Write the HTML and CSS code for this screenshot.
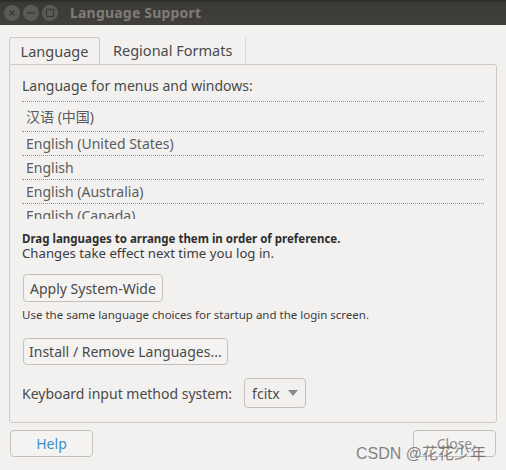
FILE: index.html
```html
<!DOCTYPE html>
<html>
<head>
<meta charset="utf-8">
<link rel="stylesheet" href="styles.css">
</head>
<body>
<div class="window">
  <div class="titlebar">
    <div class="wbtns">
      <span class="wbtn"><svg width="16" height="16" viewBox="0 0 16 16"><path d="M5.5 5.5l5 5M10.5 5.5l-5 5" stroke="#3a3935" stroke-width="1.4" fill="none"/></svg></span>
      <span class="wbtn"><svg width="16" height="16" viewBox="0 0 16 16"><path d="M4 8h8" stroke="#3a3935" stroke-width="1.4" fill="none"/></svg></span>
      <span class="wbtn"><svg width="16" height="16" viewBox="0 0 16 16"><rect x="4.5" y="4.5" width="7" height="7" stroke="#3a3935" stroke-width="1.2" fill="none"/></svg></span>
    </div>
    <div class="title">Language Support</div>
  </div>
  <div class="content">
    <div class="tabs">
      <div class="tab active">Language</div>
      <div class="tab">Regional Formats</div>
    </div>
    <div class="panel">
      <div class="heading">Language for menus and windows:</div>
      <div class="list">
        <div class="item cjk">汉语 (中国)</div>
        <div class="item">English (United States)</div>
        <div class="item">English</div>
        <div class="item">English (Australia)</div>
        <div class="item">English (Canada)</div>
      </div>
      <div class="note">
        <div class="drag">Drag languages to arrange them in order of preference.</div>
        <div class="changes">Changes take effect next time you log in.</div>
      </div>
      <div class="btn apply">Apply System-Wide</div>
      <div class="note2">Use the same language choices for startup and the login screen.</div>
      <div class="btn install">Install / Remove Languages...</div>
      <div class="kbd">
        <span>Keyboard input method system:</span>
        <div class="combo">fcitx <svg width="10" height="6" viewBox="0 0 10 6"><path d="M0 0h10L5 6z" fill="#8a8a8a"/></svg></div>
      </div>
    </div>
    <div class="footer">
      <div class="btn help">Help</div>
      <div class="btn close">Close</div>
    </div>
  </div>
  <div class="watermark">CSDN @花花少年</div>
</div>
</body>
</html>
```
FILE: styles.css
```css
html, body { margin: 0; padding: 0; }
body {
  width: 506px; height: 470px; overflow: hidden;
  background: #f2f1f0;
  font-family: "Noto Sans", "Noto Sans CJK SC", sans-serif;
  color: #3c3c3c;
}
.window { position: relative; width: 506px; height: 470px; }
.titlebar {
  height: 25px;
  background: linear-gradient(#2a2926 0, #3b3a36 3px, #403f3b 25px);
  display: flex; align-items: center;
}
.wbtns { display: flex; gap: 3px; margin-left: 4px; }
.wbtn {
  width: 16px; height: 16px; border-radius: 50%;
  background: #5b5a56; display: flex;
}
.title {
  margin-left: 12px; font-weight: bold; font-size: 14px;
  color: #7f7c77; letter-spacing: 0.2px;
}
.content { padding: 12px 9px 0 9px; }
.tabs { display: flex; height: 27px; }
.tab {
  font-size: 14.5px; color: #4a4a4a; line-height: 27px;
  padding: 0 13px;
}
.tab.active {
  width: 91px; box-sizing: border-box; text-align: center; padding: 0;
  border: 1px solid #cdc9c4; border-bottom: none; border-radius: 3px 3px 0 0;
  background: #f2f1f0;
}
.tab:nth-child(2) { border-right: 1px solid #dcd9d5; padding: 0 13px 0 13px; }
.panel {
  height: 359px; box-sizing: border-box;
  border: 1px solid #cdc9c4; border-radius: 0 3px 3px 3px;
  padding: 12px 12px 0 12px;
}
.heading { font-size: 14px; color: #4a4a4a; line-height: 18px; }
.list {
  margin-top: 6px; height: 117px; overflow: hidden;
  border-top: 1px dotted #e57a4c;
}
.item {
  height: 23px; line-height: 23px; padding-left: 4px;
  font-size: 14px; color: #5c5c5c;
  border-bottom: 1px dotted #e57a4c;
}
.item.cjk { height: 29px; line-height: 29px; }
.note { margin-top: 13px; color: #3c3c3c; }
.drag { font-size: 11.5px; line-height: 14px; font-weight: bold; color: #2e2e2e; }
.changes { font-size: 13.2px; line-height: 15px; }
.btn {
  display: inline-flex; align-items: center; justify-content: center;
  border: 1px solid #c4c1bc; border-radius: 4px;
  background: #f4f3f2; font-size: 14px; color: #4a4a4a; box-sizing: border-box;
}
.apply { margin-top: 13px; height: 28px; padding: 0 6px; margin-left: 1px; }
.note2 { font-size: 11.5px; margin-top: 6px; color: #3c3c3c; line-height: 14px; }
.install { margin-top: 16px; height: 27px; padding: 0 5px; margin-left: 1px; }
.kbd { display: flex; align-items: center; margin-top: 13px; font-size: 14px; color: #4a4a4a; gap: 12px; }
.combo {
  height: 30px; width: 62px; box-sizing: border-box;
  border: 1px solid #c4c1bc; border-radius: 4px;
  display: flex; align-items: center; gap: 8px; padding-left: 7px;
}
.footer { display: flex; justify-content: space-between; margin-top: 7px; padding: 0 1px 0 1px; }
.help, .close { width: 83px; height: 27px; }
.help { color: #3a8fc9; }
.close { color: #8a8a8a; }
.watermark {
  position: absolute; left: 356px; top: 440px;
  font-family: "Liberation Sans", "Noto Sans CJK SC", sans-serif;
  font-size: 16px; color: rgba(90, 90, 90, 0.75); white-space: nowrap;
}
```
